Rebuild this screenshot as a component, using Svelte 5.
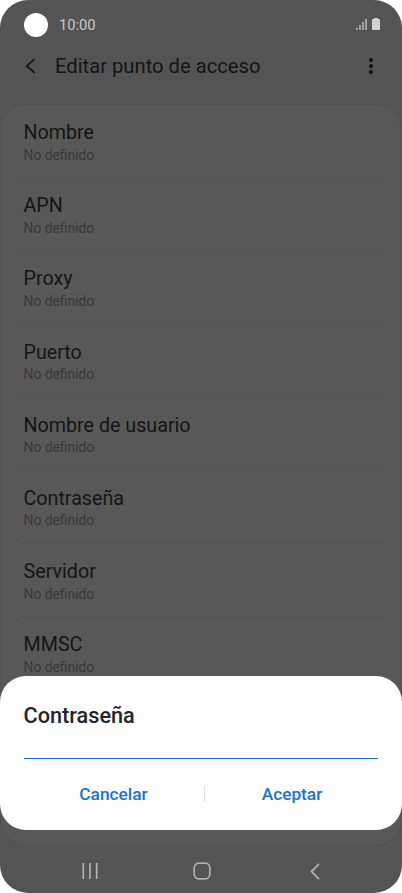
<script>
  const fields = ['Nombre', 'APN', 'Proxy', 'Puerto', 'Nombre de usuario', 'Contraseña', 'Servidor', 'MMSC'];
</script>

<div class="phone">
  <div class="status">
    <span class="camera"></span>
    <span class="time">10:00</span>
    <svg class="indicators" width="24" height="14" viewBox="0 0 24 14">
      <g fill="#c4c4c4">
        <rect x="0.4" y="9.6" width="1.3" height="2.4" />
        <rect x="3.3" y="7" width="1.4" height="5" />
        <rect x="6.3" y="4" width="1.4" height="8" />
        <rect x="9.3" y="1" width="1.4" height="11" />
      </g>
      <path d="M18 0h4v1h1.100a.9.9 0 0 1 .9.9v9.200a.9.9 0 0 1-.9.9h-6.200a.9.9 0 0 1-.9-.9V1.900a.9.9 0 0 1 .9-.9H18z" fill="#d2d2d2" />
    </svg>
  </div>

  <header>
    <svg class="back" width="12" height="16" viewBox="0 0 12 16">
      <path d="M9.600 1 1.900 7.900l7.700 6.900" fill="none" stroke="#151515" stroke-width="1.8" />
    </svg>
    <h1>Editar punto de acceso</h1>
    <svg class="more" width="6" height="18" viewBox="0 0 6 18">
      <g fill="#101010">
        <circle cx="3" cy="3" r="2" />
        <circle cx="3" cy="9" r="2" />
        <circle cx="3" cy="15" r="2" />
      </g>
    </svg>
  </header>

  <main>
    {#each fields as field}
      <div class="row">
        <div class="name">{field}</div>
        <div class="value">No definido</div>
      </div>
    {/each}
  </main>

  <nav>
    <svg width="16" height="16" viewBox="0 0 16 16">
      <path d="M1.300 0v16M8 0v16M14.700 0v16" stroke="#b0b0b0" stroke-width="1.7" />
    </svg>
    <svg class="home" width="18" height="18" viewBox="0 0 18 18">
      <rect x="1.200" y="1.200" width="15.600" height="15.600" rx="4.500" fill="none" stroke="#b0b0b0" stroke-width="1.7" />
    </svg>
    <svg width="10" height="17" viewBox="0 0 10 17">
      <path d="M9 .9 1.500 8.500 9 16.100" fill="none" stroke="#b0b0b0" stroke-width="1.8" />
    </svg>
  </nav>

  <section class="dialog">
    <h2>Contraseña</h2>
    <div class="input"></div>
    <div class="actions">
      <button>Cancelar</button>
      <span class="split"></span>
      <button>Aceptar</button>
    </div>
  </section>
</div>

<style>
  :global(body) {
    background: #fff;
    overflow: hidden;
  }
  .phone {
    position: relative;
    box-sizing: border-box;
    width: 402px;
    height: 893px;
    display: flex;
    flex-direction: column;
    overflow: hidden;
    border-radius: 28px;
    background: #545454;
    color: #151515;
    font-family: Roboto, sans-serif;
  }
  .status {
    flex: none;
    display: flex;
    align-items: center;
    height: 49px;
    padding: 0 22px 0 24px;
    box-sizing: border-box;
  }
  .camera {
    width: 24px;
    height: 24px;
    border-radius: 50%;
    background: #fff;
  }
  .time {
    margin-left: 11px;
    padding-top: 1px;
    font-size: 14.700px;
    line-height: 20px;
    color: #c9c9c9;
  }
  .indicators {
    margin-left: auto;
    margin-top: 1px;
  }
  header {
    flex: none;
    display: flex;
    align-items: center;
    height: 33px;
    padding: 0 28px 0 25px;
    margin-bottom: 22px;
  }
  h1 {
    margin: 0 auto 0 18px;
    padding-top: 1px;
    font-size: 20.200px;
    line-height: 24px;
    font-weight: 400;
  }
  main {
    flex: none;
    box-sizing: border-box;
    height: 742px;
    overflow: hidden;
    border: 1px solid #515151;
    border-radius: 27px;
    background: #585858;
    padding: 0 18px 0 19px;
  }
  .row {
    box-sizing: border-box;
    height: 73.150px;
    padding: 16.200px 0 0 3.500px;
    border-bottom: 1px solid #535353;
  }
  .name {
    font-size: 19.700px;
    line-height: 24px;
  }
  .value {
    margin-top: 0.600px;
    font-size: 13.850px;
    line-height: 18px;
    color: #393939;
  }
  nav {
    flex: none;
    box-sizing: border-box;
    display: flex;
    align-items: center;
    justify-content: space-between;
    height: 47px;
    padding: 3px 82px 0;
  }
  .home {
    margin: 0 4px 0 0;
  }
  .dialog {
    position: absolute;
    left: 0;
    right: 0;
    top: 676px;
    height: 154px;
    box-sizing: border-box;
    padding: 26px 24px 0 23.500px;
    border-radius: 26px;
    background: #fdfdfd;
  }
  h2 {
    margin: 0;
    font-size: 21.700px;
    line-height: 27px;
    font-weight: 500;
    color: #252528;
  }
  .input {
    height: 29px;
    border-bottom: 1px solid #1878c8;
  }
  .actions {
    display: flex;
    align-items: center;
    height: 70px;
  }
  button {
    flex: none;
    width: 180px;
    padding: 0;
    border: 0;
    background: none;
    font: 500 17.300px/22px Roboto, sans-serif;
    color: #1474cf;
  }
  button:last-child {
    width: 175px;
  }
  .split {
    flex: none;
    width: 1px;
    height: 16px;
    background: #dedede;
  }
</style>
